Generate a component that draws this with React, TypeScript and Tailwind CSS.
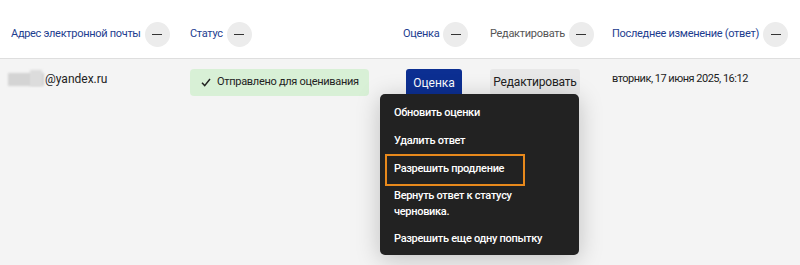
import React from 'react';

const font = { fontFamily: 'Roboto, "Noto Sans", Arial, sans-serif' };

// Collapse toggle next to each column title
const Toggle = () => (
  <span className="ml-[4px] flex h-[25px] w-[25px] shrink-0 items-center justify-center rounded-full bg-[#ececec]">
    <span className="h-[1.5px] w-[10px] bg-[#333]" />
  </span>
);

const HeaderCell = ({ label, width, pl, gray }: { label: string; width: string; pl: string; gray?: boolean }) => (
  <div className={`flex items-center ${width} ${pl}`}>
    <span className={`text-[11px] tracking-[-0.3px] whitespace-nowrap ${gray ? 'text-[#555]' : 'text-[#1d3d8f]'}`}>{label}</span>
    <Toggle />
  </div>
);

const menuItems = ['Обновить оценки', 'Удалить ответ', 'Разрешить продление'];

const App: React.FC = () => {
  return (
    <div className="relative h-[265px] w-[800px] overflow-hidden bg-white" style={font}>
      {/* column titles */}
      <div className="flex h-[59px] border-b border-[#dedede] pt-[22px]">
        <div className="flex h-[25px] w-full">
          <HeaderCell label="Адрес электронной почты" width="w-[180px]" pl="pl-[11px]" />
          <HeaderCell label="Статус" width="w-[215px]" pl="pl-[10px]" />
          <HeaderCell label="Оценка" width="w-[85px]" pl="pl-[8px]" />
          <HeaderCell label="Редактировать" width="w-[120px]" pl="pl-[10px]" gray />
          <HeaderCell label="Последнее изменение (ответ)" width="w-[200px]" pl="pl-[12px]" />
        </div>
      </div>

      {/* submission row */}
      <div className="flex h-[206px] bg-[#f4f4f4] pt-[10px]">
        <div className="flex w-[180px] items-start pl-[8px] pt-[2px]">
          <div className="flex h-[16px] items-center">
            <span className="relative mr-[1px] h-[13px] w-[36px]">
              <span className="absolute inset-0 bg-[#d4d4d4] blur-[1px]" />
              <span className="absolute left-[22px] top-[-3px] h-[16px] w-[12px] bg-[#dcdcdc] blur-[1px]" />
            </span>
            <span className="text-[12px] text-[#222]">@yandex.ru</span>
          </div>
        </div>
        <div className="w-[215px] pl-[10px]">
          <div className="flex h-[27px] w-[179px] items-center gap-[6px] rounded-[4px] bg-[#d8f0d6] pl-[11px]">
            <svg width="10" height="9" viewBox="0 0 10 9" fill="none">
              <path d="M1 4.8 L3.7 7.6 L9 1" stroke="#222" strokeWidth="1.5" />
            </svg>
            <span className="text-[11px] tracking-[-0.3px] text-[#222]">Отправлено для оценивания</span>
          </div>
        </div>
        <div className="w-[85px] pl-[11px]">
          <div className="flex h-[28px] w-[56px] items-center justify-center rounded-[3px] bg-[#0c2f92] text-[12px] text-white">
            Оценка
          </div>
        </div>
        <div className="w-[120px] pl-[10px]">
          <div className="flex h-[26px] w-[90px] items-center justify-center rounded-[3px] bg-[#e8e8e8] text-[12px] tracking-[-0.2px] text-[#222]">
            Редактировать
          </div>
        </div>
        <div className="w-[200px] pl-[12px] pt-[2px]">
          <div className="flex h-[16px] items-center text-[11px] tracking-[-0.5px] text-[#222]">вторник, 17 июня 2025, 16:12</div>
        </div>
      </div>

      {/* action menu */}
      <div className="absolute left-[380px] top-[94px] w-[199px] rounded-[5px] bg-[#222222] pb-[2px] pt-[5px] text-[11px] font-medium tracking-[-0.3px] text-white shadow-[0_4px_24px_rgba(0,0,0,0.22)]">
        {menuItems.map((item) => (
          <div key={item} className="flex h-[28px] items-center pl-[14px]">
            {item}
          </div>
        ))}
        <div className="flex h-[42px] flex-col justify-center pl-[14px] leading-[16px]">
          <span>Вернуть ответ к статусу</span>
          <span>черновика.</span>
        </div>
        <div className="flex h-[28px] items-center pl-[14px]">Разрешить еще одну попытку</div>
        <div className="absolute left-[5px] top-[60px] h-[32px] w-[140px] border-2 border-[#e8891c]" />
      </div>
    </div>
  );
};

export default App;
